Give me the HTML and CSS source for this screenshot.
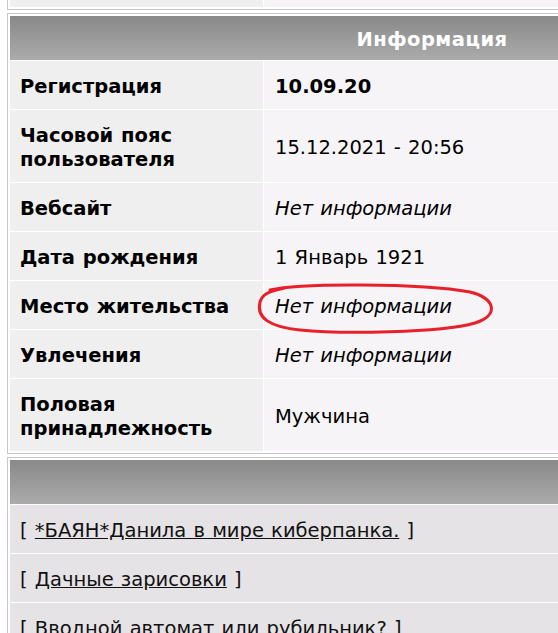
FILE: index.html
```html
<!DOCTYPE html>
<html lang="ru">
<head>
<meta charset="utf-8">
<title>Профиль</title>
<link rel="stylesheet" href="styles.css">
</head>
<body>
<div class="page">
  <table class="box box-prev">
    <colgroup><col class="col-label"><col></colgroup>
    <tr><td class="label">&nbsp;</td><td class="value">&nbsp;</td></tr>
  </table>

  <table class="box">
    <colgroup><col class="col-label"><col></colgroup>
    <tr><td class="head" colspan="2">Информация</td></tr>
    <tr><td class="label">Регистрация</td><td class="value strong">10.09.20</td></tr>
    <tr><td class="label">Часовой пояс<br>пользователя</td><td class="value">15.12.2021 - 20:56</td></tr>
    <tr><td class="label">Вебсайт</td><td class="value em">Нет информации</td></tr>
    <tr><td class="label">Дата рождения</td><td class="value">1 Январь 1921</td></tr>
    <tr><td class="label">Место жительства</td><td class="value em">Нет информации</td></tr>
    <tr><td class="label">Увлечения</td><td class="value em">Нет информации</td></tr>
    <tr><td class="label">Половая<br>принадлежность</td><td class="value">Мужчина</td></tr>
  </table>

  <table class="box box-topics">
    <tr><td class="head">&nbsp;</td></tr>
    <tr><td class="topic">[ <a href="#">*БАЯН*Данила в мире киберпанка.</a> ]</td></tr>
    <tr><td class="topic">[ <a href="#">Дачные зарисовки</a> ]</td></tr>
    <tr><td class="topic">[ <a href="#">Вводной автомат или рубильник?</a> ]</td></tr>
  </table>
</div>

<svg class="mark" width="558" height="633" viewBox="0 0 558 633" aria-hidden="true">
  <path d="M270 290 C300 283 420 283 470 292 C495 298 500 315 475 323 C440 333 340 334 300 330 C270 327 256 318 260 302 C262 295 268 291 285 288" fill="none" stroke="#e8202a" stroke-width="3" stroke-linecap="round" stroke-linejoin="round"/>
</svg>
</body>
</html>
```

FILE: styles.css
```css
html, body {
  margin: 0;
  padding: 0;
  overflow: hidden;
  background: #ffffff;
}

body {
  font-family: "DejaVu Sans", Verdana, sans-serif;
  font-size: 19.5px;
  line-height: 24px;
  word-spacing: 1px;
  color: #000000;
}

.page {
  padding-left: 7px;
}

.box {
  width: 850px;
  table-layout: fixed;
  border: 1px solid #c8c4cc;
  padding: 1px;
  border-spacing: 1px;
  background: #ffffff;
}

.box-prev {
  margin-top: -44px;
  margin-bottom: 3px;
}

.box-topics {
  margin-top: 3px;
}

.col-label {
  width: 253px;
}

.box td {
  padding: 14px 11px 10px;
  vertical-align: middle;
}

.box td.label {
  background: #efefef;
  font-weight: bold;
  padding-left: 10px;
}

.box td.value {
  background: #f7f4f7;
}

.strong {
  font-weight: bold;
}

.em {
  font-style: italic;
}

.box td.head {
  height: 44px;
  box-sizing: border-box;
  padding: 4px 0 0;
  background: linear-gradient(#898989, #ababab);
  color: #ffffff;
  font-weight: bold;
  text-align: center;
  letter-spacing: 0.5px;
}

.box td.topic {
  background: #e6e3e6;
  padding: 14px 10px 10px;
  color: #111111;
}

.topic a {
  color: #111111;
  text-decoration: underline;
}

.mark {
  position: absolute;
  left: 0;
  top: 0;
  pointer-events: none;
}
```
